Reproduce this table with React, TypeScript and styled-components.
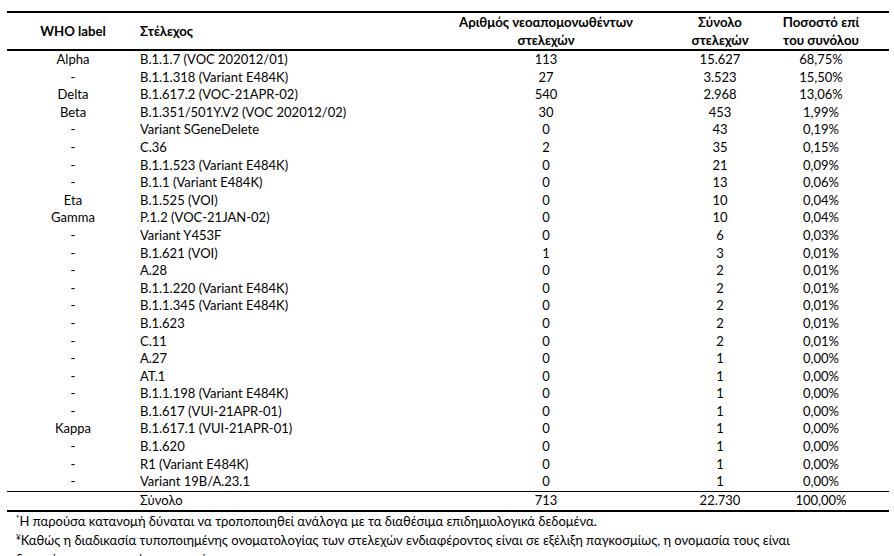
import React from "react";
import styled, { createGlobalStyle } from "styled-components";

const Global = createGlobalStyle`
  html, body { margin: 0; padding: 0; background: #fff; }
  body { font-family: Lato, "Open Sans", sans-serif; color: #000; overflow: hidden; }
`;

const Page = styled.div`
  width: 894px;
  height: 556px;
  padding: 11px 0 0 7px;
  box-sizing: border-box;
  overflow: hidden;
`;

const Table = styled.div`
  width: 882px;
  display: grid;
  grid-template-columns: 132px 316px 182px 166px 86px;
  border-top: 2px solid #000;
  border-bottom: 2px solid #000;
  font-size: 13px;
`;

const HeadCell = styled.div<{ $align?: "left" | "center"; $pr?: number }>`
  display: flex;
  align-items: center;
  justify-content: ${(p) => (p.$align === "left" ? "flex-start" : "center")};
  text-align: center;
  font-weight: 700;
  font-size: 13.2px;
  line-height: 18px;
  height: 36px;
  white-space: nowrap;
  padding-right: ${(p) => p.$pr ?? 0}px;
  padding-left: ${(p) => (p.$align === "left" ? 1 : 0)}px;
  border-bottom: 2px solid #000;
`;

const Cell = styled.div<{ $align?: "left" | "center"; $pr?: number; $total?: boolean }>`
  display: flex;
  align-items: center;
  justify-content: ${(p) => (p.$align === "left" ? "flex-start" : "center")};
  height: ${(p) => (p.$total ? "18.5px" : "17.6px")};
  line-height: 17.6px;
  white-space: nowrap;
  padding-right: ${(p) => p.$pr ?? 0}px;
  padding-left: ${(p) => (p.$align === "left" ? 1 : 0)}px;
  border-top: ${(p) => (p.$total ? "1px solid #000" : "none")};
`;

const Notes = styled.div`
  padding: 0 0 0 9px;
  font-size: 13px;
  line-height: 18.8px;
`;

const Note = styled.p`
  margin: 0;
  white-space: nowrap;
`;

const Mark = styled.sup`
  font-size: 8px;
  vertical-align: 5px;
  line-height: 0;
`;

type Row = [string, string, string, string, string];

const rows: Row[] = [
  ["Alpha", "B.1.1.7 (VOC 202012/01)", "113", "15.627", "68,75%"],
  ["-", "B.1.1.318 (Variant E484K)", "27", "3.523", "15,50%"],
  ["Delta", "B.1.617.2 (VOC-21APR-02)", "540", "2.968", "13,06%"],
  ["Beta", "B.1.351/501Y.V2 (VOC 202012/02)", "30", "453", "1,99%"],
  ["-", "Variant SGeneDelete", "0", "43", "0,19%"],
  ["-", "C.36", "2", "35", "0,15%"],
  ["-", "B.1.1.523 (Variant E484K)", "0", "21", "0,09%"],
  ["-", "B.1.1 (Variant E484K)", "0", "13", "0,06%"],
  ["Eta", "B.1.525 (VOI)", "0", "10", "0,04%"],
  ["Gamma", "P.1.2 (VOC-21JAN-02)", "0", "10", "0,04%"],
  ["-", "Variant Y453F", "0", "6", "0,03%"],
  ["-", "B.1.621 (VOI)", "1", "3", "0,01%"],
  ["-", "A.28", "0", "2", "0,01%"],
  ["-", "B.1.1.220 (Variant E484K)", "0", "2", "0,01%"],
  ["-", "B.1.1.345 (Variant E484K)", "0", "2", "0,01%"],
  ["-", "B.1.623", "0", "2", "0,01%"],
  ["-", "C.11", "0", "2", "0,01%"],
  ["-", "A.27", "0", "1", "0,00%"],
  ["-", "AT.1", "0", "1", "0,00%"],
  ["-", "B.1.1.198 (Variant E484K)", "0", "1", "0,00%"],
  ["-", "B.1.617 (VUI-21APR-01)", "0", "1", "0,00%"],
  ["Kappa", "B.1.617.1 (VUI-21APR-01)", "0", "1", "0,00%"],
  ["-", "B.1.620", "0", "1", "0,00%"],
  ["-", "R1 (Variant E484K)", "0", "1", "0,00%"],
  ["-", "Variant 19B/A.23.1", "0", "1", "0,00%"],
];

export default function App() {
  return (
    <Page>
      <Global />
      <Table>
        <HeadCell>WHO label</HeadCell>
        <HeadCell $align="left">Στέλεχος</HeadCell>
        <HeadCell>
          Αριθμός νεοαπομονωθέντων
          <br />
          στελεχών
        </HeadCell>
        <HeadCell>
          Σύνολο
          <br />
          στελεχών
        </HeadCell>
        <HeadCell $pr={50}>
          Ποσοστό επί
          <br />
          του συνόλου
        </HeadCell>
        {rows.map((r, i) => (
          <React.Fragment key={i}>
            <Cell>{r[0]}</Cell>
            <Cell $align="left">{r[1]}</Cell>
            <Cell>{r[2]}</Cell>
            <Cell>{r[3]}</Cell>
            <Cell $pr={50}>{r[4]}</Cell>
          </React.Fragment>
        ))}
        <Cell $total></Cell>
        <Cell $total $align="left">Σύνολο</Cell>
        <Cell $total>713</Cell>
        <Cell $total>22.730</Cell>
        <Cell $total $pr={50}>100,00%</Cell>
      </Table>
      <Notes>
        <Note>
          <Mark>*</Mark>Η παρούσα κατανομή δύναται να τροποποιηθεί ανάλογα με τα διαθέσιμα επιδημιολογικά δεδομένα.
        </Note>
        <Note>
          <Mark>¥</Mark>Καθώς η διαδικασία τυποποιημένης ονοματολογίας των στελεχών ενδιαφέροντος είναι σε εξέλιξη παγκοσμίως, η ονομασία τους είναι
        </Note>
        <Note>δυνατό να τροποποιείται στο χρόνο.</Note>
      </Notes>
    </Page>
  );
}
